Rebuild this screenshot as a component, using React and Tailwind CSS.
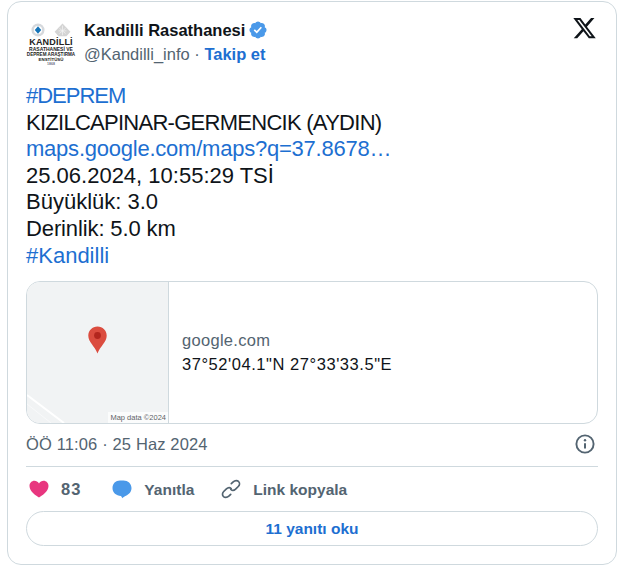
import React from 'react';

const FONT = "font-['Liberation_Sans',sans-serif]";

function Logo() {
  return (
    <div className="flex h-[50px] w-[50px] shrink-0 flex-col items-center overflow-hidden font-['Liberation_Sans',sans-serif] text-[#222]">
      <div className="flex items-center gap-[8px]">
        <svg width="14" height="14" viewBox="0 0 15 15">
          <circle cx="7.5" cy="7.5" r="7" fill="#d5d8dc" />
          <circle cx="7.5" cy="7.5" r="4.4" fill="#fff" />
          <path d="M7.5 3.5 11 7.5 7.5 11.5 4 7.5Z" fill="#1574b8" />
        </svg>
        <svg width="19" height="14" viewBox="0 0 19 16">
          <path d="M9.5 0.5 18.5 10 14 15H5L0.5 10Z" fill="#d4d4d4" />
          <path d="M9.5 3 9.5 14M5 9 14 9M6 12 13 6M6 6 13 12" stroke="#f5f5f5" strokeWidth="0.8" />
        </svg>
      </div>
      <div className="text-[9px] font-bold leading-[10px] tracking-[0.2px]">KANDİLLİ</div>
      <div className="text-[5px] font-bold leading-[5px] whitespace-nowrap">RASATHANESİ VE</div>
      <div className="text-[4.6px] font-bold leading-[5px] whitespace-nowrap">DEPREM ARAŞTIRMA</div>
      <div className="text-[4.4px] font-bold leading-[5px] whitespace-nowrap">ENSTİTÜSÜ</div>
      <div className="text-[3.5px] font-bold leading-[5px] text-gray-500">1868</div>
    </div>
  );
}

function VerifiedBadge() {
  return (
    <svg width="20" height="20" viewBox="0 0 22 22" className="shrink-0">
      <path
        fill="#4a99e9"
        d="M20.396 11c-.018-.646-.215-1.275-.57-1.816-.354-.54-.852-.972-1.438-1.246.223-.607.27-1.264.14-1.897-.131-.634-.437-1.218-.882-1.687-.47-.445-1.053-.75-1.687-.882-.633-.13-1.29-.083-1.897.14-.273-.587-.704-1.086-1.245-1.44S11.647 1.62 11 1.604c-.646.017-1.273.213-1.813.568s-.969.854-1.24 1.44c-.608-.223-1.267-.272-1.902-.14-.635.13-1.22.436-1.69.882-.445.47-.749 1.055-.878 1.688-.13.633-.08 1.29.144 1.896-.587.274-1.087.705-1.443 1.245-.356.54-.555 1.17-.574 1.817.02.647.218 1.276.574 1.817.356.54.856.972 1.443 1.245-.224.606-.274 1.263-.144 1.896.13.634.433 1.218.877 1.688.47.443 1.054.747 1.687.878.633.132 1.29.084 1.897-.136.274.586.705 1.084 1.246 1.439.54.354 1.17.551 1.816.569.647-.016 1.276-.213 1.817-.567s.972-.854 1.245-1.44c.604.239 1.266.296 1.903.164.636-.132 1.22-.447 1.68-.907.46-.46.776-1.044.908-1.681s.075-1.299-.165-1.903c.586-.274 1.084-.705 1.439-1.246.354-.54.551-1.17.569-1.816z"
      />
      <path fill="#fff" d="M9.662 14.85l-3.429-3.428 1.293-1.302 2.072 2.072 4.4-4.794 1.347 1.246z" />
    </svg>
  );
}

function MapCard() {
  return (
    <div className="mt-[12px] flex h-[143px] overflow-hidden rounded-[14px] border border-[#cfd9de]">
      <div className="relative w-[142px] shrink-0 border-r border-[#cfd9de] bg-[#f1f3f4]">
        <svg width="141" height="141" viewBox="0 0 141 141" className="absolute left-0 top-0">
          <path d="M0 113 37 141" stroke="#fff" strokeWidth="2" fill="none" />
          <path d="M0 122 24 141" stroke="#f8f9fa" strokeWidth="1" fill="none" />
          <path
            d="M70.500 44.500c-5.200 0-9.200 4-9.200 9.200 0 6.500 6.600 10.500 9.200 17.800 2.600-7.300 9.200-11.300 9.200-17.800 0-5.200-4-9.200-9.200-9.200z"
            fill="#db4c3f"
          />
          <circle cx="70.500" cy="53.500" r="3.400" fill="#b3261e" />
        </svg>
        <div className="absolute bottom-0 right-0 bg-white/70 px-[2px] font-['Liberation_Sans',sans-serif] text-[7.5px] leading-[11px] text-[#5f6368]">
          Map data ©2024
        </div>
      </div>
      <div className="flex flex-1 flex-col justify-center pb-px pl-[13px]">
        <div className="text-[16.5px] leading-[24px] tracking-[0.3px] text-[#536471]">google.com</div>
        <div className="text-[16.5px] leading-[24px] tracking-[0.55px] text-[#0f1419]">37°52'04.1"N 27°33'33.5"E</div>
      </div>
    </div>
  );
}

export default function App() {
  return (
    <div className={`h-[565px] w-[640px] overflow-hidden bg-white pl-[7px] pt-[1px] ${FONT}`}>
      <div className="flex h-[564px] w-[610px] flex-col rounded-[14px] border border-[#cfd9de] px-[18px]">
        <div className="flex items-start pt-[13px]">
          <div className="mt-[8px]">
            <Logo />
          </div>
          <div className="ml-[8px] flex-1 pt-[2px]">
            <div className="flex items-center gap-[3px] text-[16.5px] font-bold leading-[26px] text-[#0f1419]">
              Kandilli Rasathanesi
              <VerifiedBadge />
            </div>
            <div className="text-[16.5px] leading-[23px] text-[#536471]">
              @Kandilli_info · <span className="font-bold text-[#1d6fd1]">Takip et</span>
            </div>
          </div>
          <svg width="25" height="23" viewBox="0 0 24 22" className="mt-[3px] mr-px" fill="#0f1419">
            <path d="M18.244 0h3.308l-7.227 8.260 8.502 11.240H16.170l-5.214-6.817L4.990 19.500H1.680l7.730-8.835L1.254 0H8.080l4.713 6.231zm-1.161 17.520h1.833L7.084 1.876H5.117z" />
          </svg>
        </div>

        <div className="mt-[10px] text-[22px] leading-[26.6px] text-[#0f1419]">
          <div className="tracking-[-1px] text-[#1d6fd1]">#DEPREM</div>
          <div className="tracking-[-0.73px]">KIZILCAPINAR-GERMENCIK (AYDIN)</div>
          <div className="tracking-[-0.23px] text-[#1d6fd1]">maps.google.com/maps?q=37.8678…</div>
          <div>25.06.2024, 10:55:29 TSİ</div>
          <div>Büyüklük: 3.0</div>
          <div className="tracking-[-0.12px]">Derinlik: 5.0 km</div>
          <div className="text-[#1d6fd1]">#Kandilli</div>
        </div>

        <MapCard />

        <div className="mt-[3px] flex h-[34px] items-center justify-between text-[16.5px] text-[#536471]">
          <span className="tracking-[0.14px]">ÖÖ 11:06 · 25 Haz 2024</span>
          <svg width="22" height="22" viewBox="0 0 22 22" fill="none" className="mr-[2px]">
            <circle cx="11" cy="11" r="8.600" stroke="#536471" strokeWidth="1.900" />
            <circle cx="11" cy="7.300" r="1.200" fill="#536471" />
            <path d="M11 10.200v5.400" stroke="#536471" strokeWidth="2" />
          </svg>
        </div>
        <div className="mt-[5px] h-px bg-[#cfd9de]" />

        <div className="mt-[5px] flex h-[34px] items-center text-[15.5px] font-bold text-[#536471]">
          <svg width="20" height="18" viewBox="0 0 20 18" className="ml-[3px]">
            <path
              d="M10 17.500C7.500 16 .5 11.700.5 6 .5 2.900 2.800.8 5.400.8 7.200.8 9 1.700 10 3.400 11 1.700 12.800.8 14.600.8c2.600 0 4.900 2.100 4.900 5.200 0 5.700-7 10-9.500 11.500z"
              fill="#e8367f"
            />
          </svg>
          <span className="ml-[12px] text-[16.5px] tracking-[1px]">83</span>
          <svg width="20" height="19" viewBox="0 0 20 19" className="ml-[31px]">
            <path
              d="M8 .5h3.500c4.400 0 8 3 8 7.500 0 4-2.800 6.500-5.500 7.700-1.500.7-3 1.500-3.600 2.500-.5-.8-1-1.600-1.400-2.300C4.200 15.700.5 12.700.5 8 .5 3.600 3.700.5 8 .5z"
              fill="#4a99e9"
            />
          </svg>
          <span className="ml-[12px]">Yanıtla</span>
          <svg width="20" height="20" viewBox="0 0 20 20" fill="none" stroke="#536471" strokeWidth="1.700" strokeLinecap="round" className="ml-[27px]">
            <path d="M10.300 4.700l1.900-1.900c1.800-1.700 4.300-1.500 5.400-.3 1.300 1.300 1.200 3.500-.3 5L14.600 10.200c-1.500 1.400-3.500 1.500-4.800.3" />
            <path d="M9.700 15.300l-1.900 1.900c-1.800 1.700-4.300 1.500-5.400.3-1.300-1.300-1.200-3.500.3-5L5.400 9.800c1.500-1.400 3.500-1.500 4.800-.3" />
          </svg>
          <span className="ml-[12px]">Link kopyala</span>
        </div>

        <div className="mt-[5px] flex h-[35px] items-center justify-center rounded-full border border-[#cfd9de] pb-px text-[15.5px] font-bold text-[#1d6fd1]">
          11 yanıtı oku
        </div>
      </div>
    </div>
  );
}
